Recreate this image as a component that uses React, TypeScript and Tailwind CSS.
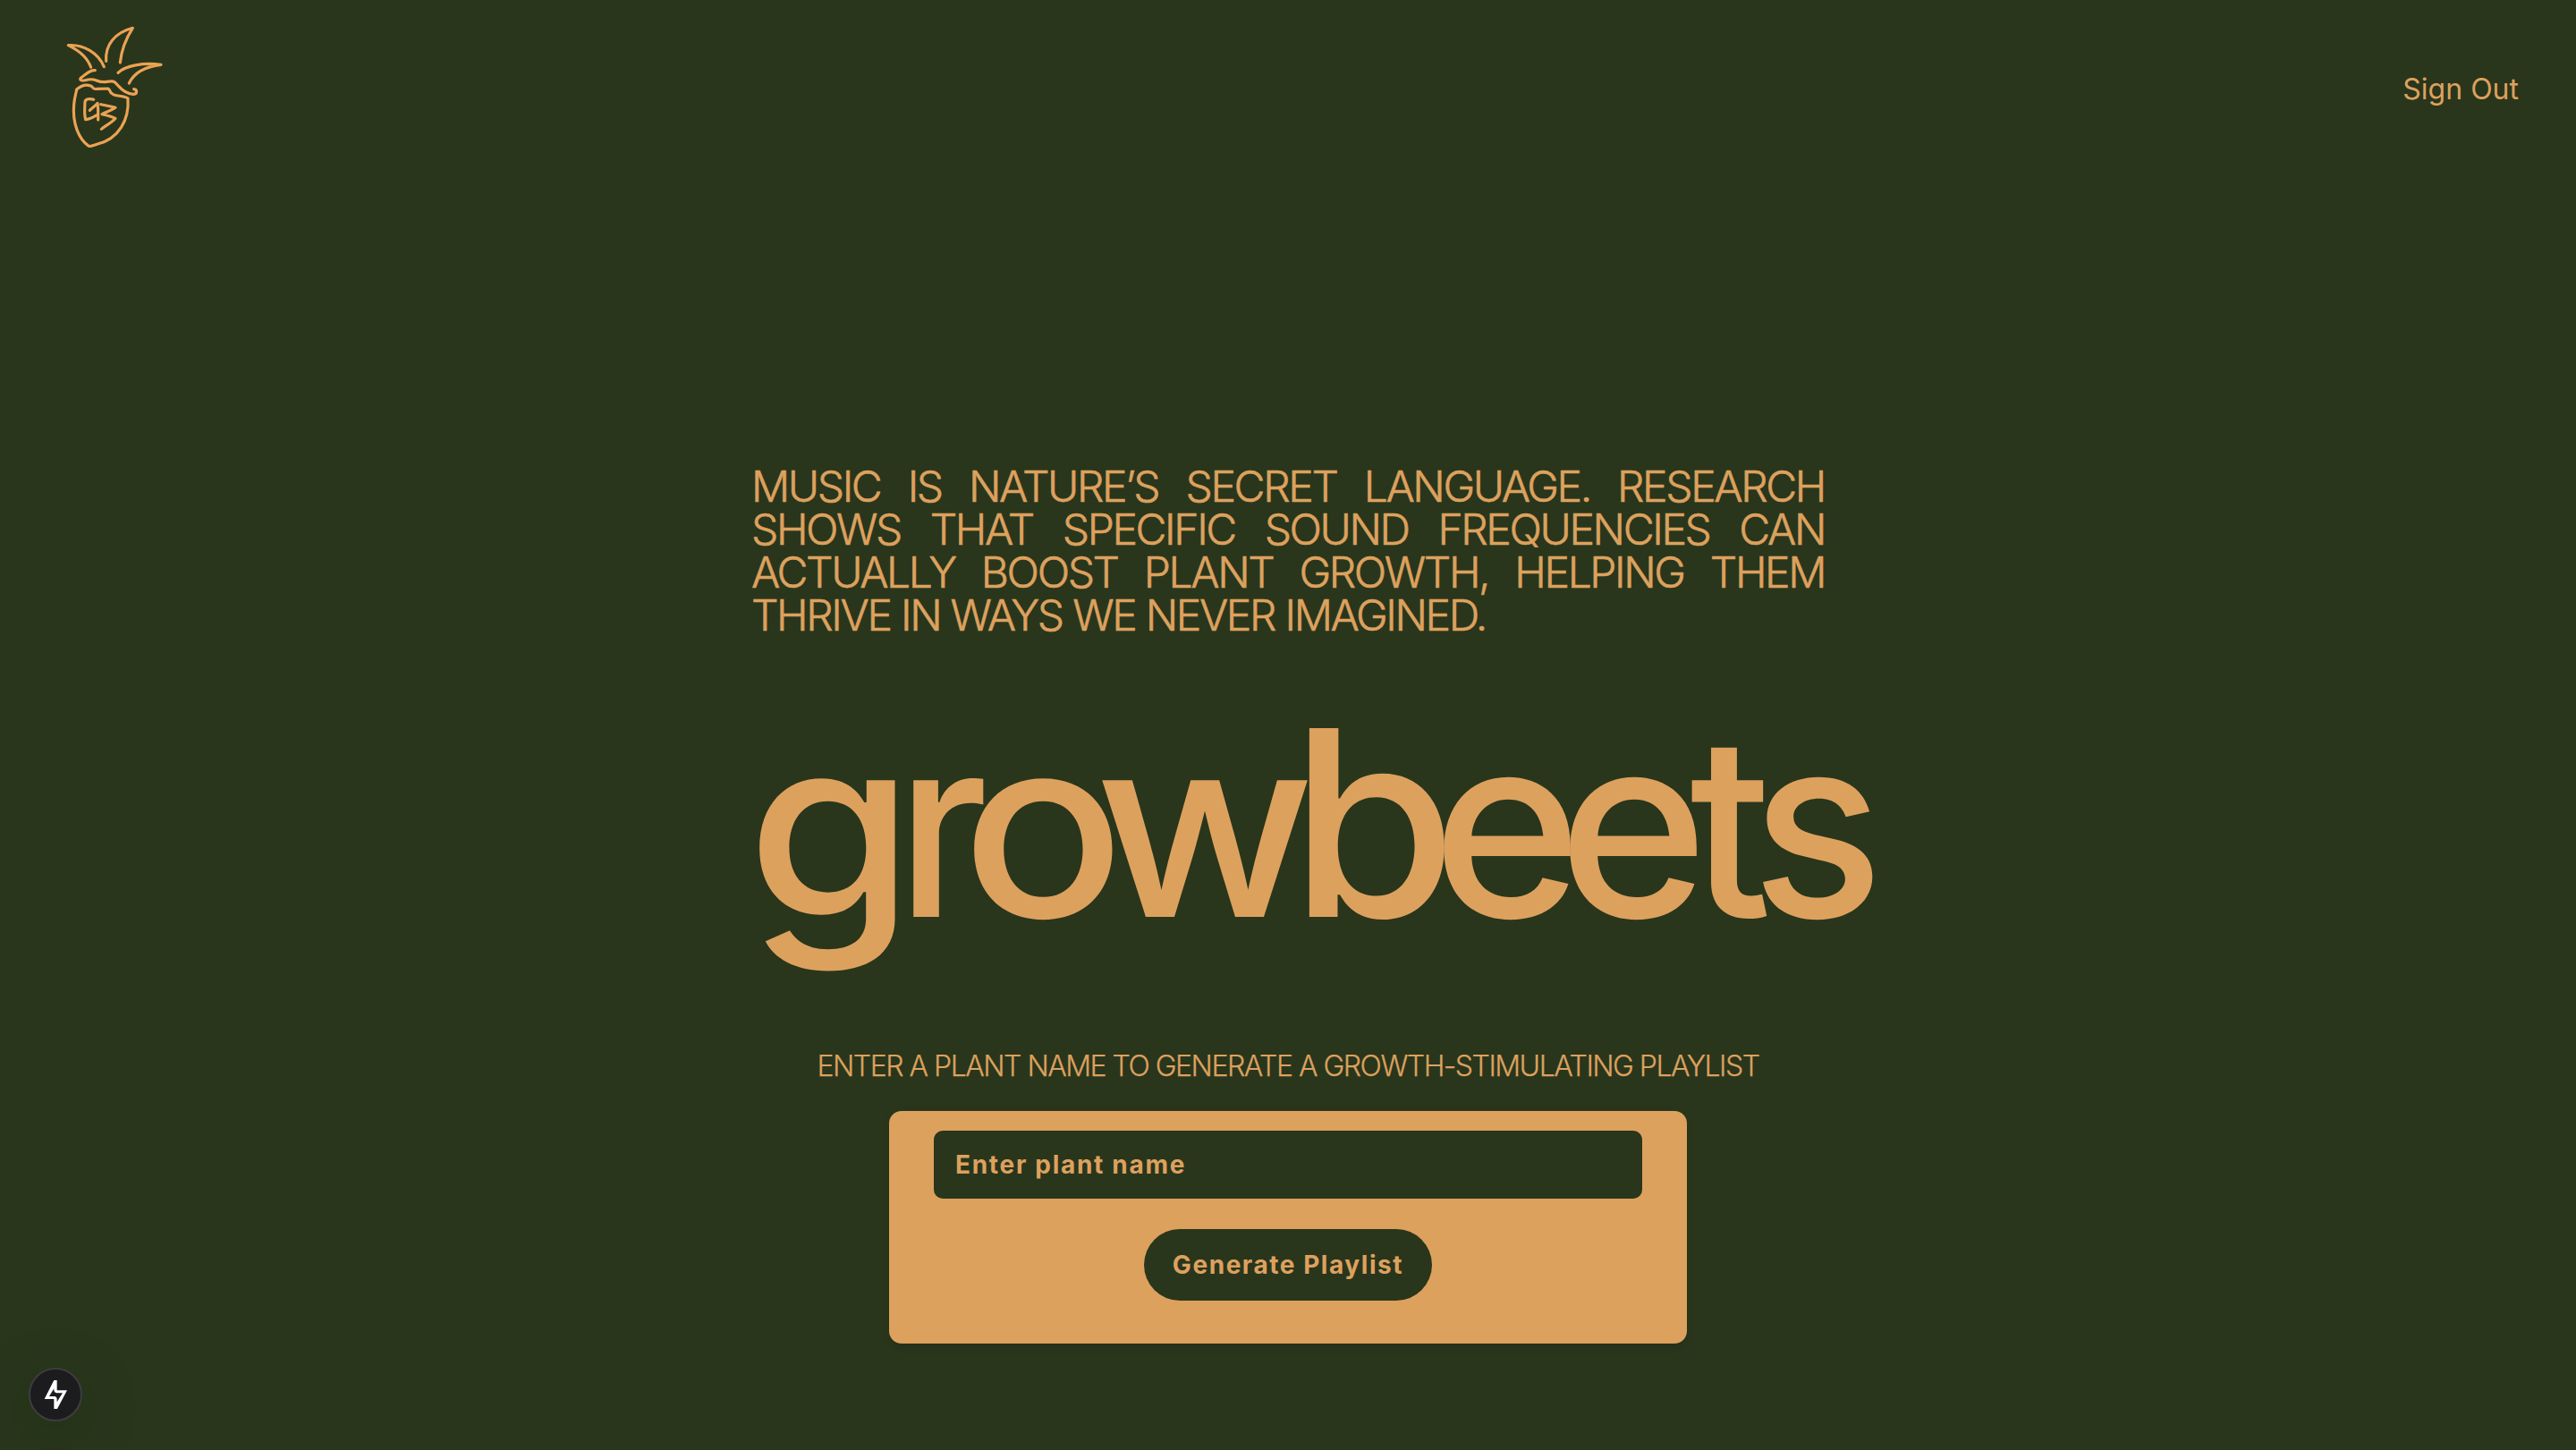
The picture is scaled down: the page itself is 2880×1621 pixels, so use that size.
const WORDMARK = [
  { ch: "g", box: "w-[167px]", glyph: "scale-x-[1.08]" },
  { ch: "r", box: "w-[73px]", glyph: "scale-x-[0.95]" },
  { ch: "o", box: "w-[149px]", glyph: "scale-x-[1.08]" },
  { ch: "w", box: "w-[218px]", glyph: "scale-x-[1.06]" },
  { ch: "b", box: "w-[159px]", glyph: "scale-x-[1.08] scale-y-[1.035]" },
  { ch: "e", box: "w-[141px]", glyph: "scale-x-[1.02] scale-y-[1.01]" },
  { ch: "e", box: "w-[147px]", glyph: "scale-x-[1.02] scale-y-[1.01]" },
  { ch: "t", box: "w-[69px]", glyph: "scale-x-[0.96]" },
  { ch: "s", box: "w-[140px]", glyph: "scale-x-[0.98] scale-y-[1.01]" },
];

function BeetLogo() {
  return (
    <svg
      className="block h-[160px] w-[140px]"
      viewBox="0 0 420 480"
      fill="none"
      stroke="#eba354"
      strokeWidth="9.5"
      strokeLinecap="round"
      strokeLinejoin="round"
    >
      <path d="M125 166C115 138 90 112 49 92C100 88 150 118 169 164" />
      <path d="M176 145C172 90 205 50 265 34C245 65 228 100 223 150" />
      <path d="M216 184C240 160 300 149 360 157C310 163 270 183 253 219" />
      <path d="M139 176C120 174 108 190 91 201C84 209 96 213 115 207C145 202 140 216 172 215C210 208 205 217 218 229C232 245 250 255 268 256C282 255 280 240 269 239" />
      <path d="M77 240C92 227 110 222 124 228C135 232 128 241 146 238L182 237C192 241 184 250 200 257C220 264 240 262 249 270C254 340 220 405 145 424C132 428 125 432 118 430C85 408 62 355 68 290C70 265 75 255 77 240Z" />
      <path d="M134 274C122 270 106 271 105 282C104 300 102 325 107 341C120 340 135 332 145 326" />
      <path d="M121 310C130 300 142 294 147 286C150 300 149 325 149 342" />
      <path d="M158 290C175 294 190 296 207 301C195 310 175 316 162 323C180 327 195 330 207 337C195 352 175 360 160 373" />
    </svg>
  );
}

function BoltIcon() {
  return (
    <svg className="block h-[34px] w-[28px]" viewBox="144 306 84 102" fill="#fff">
      <path
        fillRule="evenodd"
        d="M181 309H191V343H225L192 405H181V372H149ZM181 337L165 363H184Q191 364 191 372V382L210 352H190Q183 351 181 344Z"
      />
    </svg>
  );
}

export default function App() {
  return (
    <div className="flex h-[1621px] w-[2880px] flex-col overflow-hidden bg-[#29361c] font-['Inter',sans-serif] text-[#dda15e]">
      <header className="flex h-[198px] shrink-0 items-center justify-between pl-[60px] pr-16 pt-px">
        <BeetLogo />
        <a className="text-[32px] leading-[48px]">Sign Out</a>
      </header>

      <main className="flex flex-col items-center">
        <p className="mt-[322px] w-[1200px] text-justify text-[48px] font-light leading-[48px] tracking-[-2.4px] [-webkit-text-stroke:0.6px_#dda15e] [word-spacing:0.3px]">
          MUSIC IS NATURE’S SECRET LANGUAGE. RESEARCH SHOWS THAT SPECIFIC SOUND
          FREQUENCIES CAN ACTUALLY BOOST PLANT GROWTH, HELPING THEM THRIVE IN
          WAYS WE NEVER IMAGINED.
        </p>

        <h1 className="mt-[72px] flex w-[1210px] text-[280px] font-medium leading-[280px]">
          {WORDMARK.map(({ ch, box, glyph }, i) => (
            <span key={i} className={`shrink-0 ${box}`}>
              <span className={`inline-block origin-[0_242px] ${glyph}`}>{ch}</span>
            </span>
          ))}
        </h1>

        <p className="mt-[112px] whitespace-nowrap text-[32px] font-light leading-8 tracking-[-1.5px] [-webkit-text-stroke:0.25px_#dda15e]">
          ENTER A PLANT NAME TO GENERATE A GROWTH-STIMULATING PLAYLIST
        </p>

        <form className="mt-[34px] flex h-[260px] w-[892px] flex-col items-center rounded-[14px] bg-[#dda15e] pt-[22px] shadow-[0_4px_8px_rgba(0,0,0,0.1)]">
          <input
            placeholder="Enter plant name"
            className="h-[76px] w-[792px] rounded-[10px] bg-[#29361c] px-6 text-[28px] font-bold tracking-[1.7px] placeholder:text-[#dda15e] placeholder:opacity-100"
          />
          <button
            type="button"
            className="mt-[34px] h-20 w-[322px] rounded-full bg-[#29361c] text-[28px] font-bold tracking-[1.55px]"
          >
            Generate Playlist
          </button>
        </form>
      </main>

      <div className="fixed bottom-8 left-8 flex size-[60px] items-center justify-center rounded-full border-2 border-[#3d3d3f] bg-[#1c1b1d] shadow-[0_16px_64px_rgba(10,40,0,0.25)]">
        <BoltIcon />
      </div>
    </div>
  );
}
